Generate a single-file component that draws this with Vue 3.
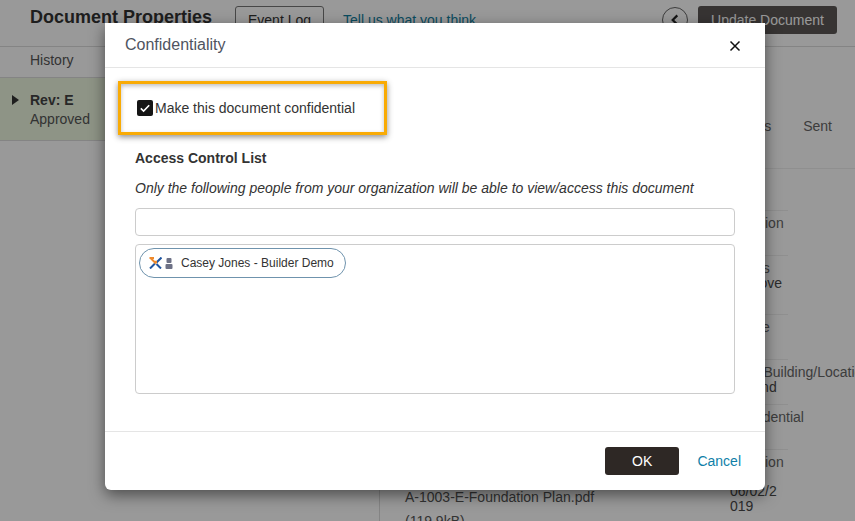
<script setup>
const details = [
  { label: 'Revision', value: '', h: 45 },
  { label: 'Status', value: 'Approve', h: 59 },
  { label: 'Phase', value: '', h: 45 },
  { label: 'Area Building/Location', value: 'Ground', h: 45 },
  { label: 'Confidential', value: '', h: 45 },
  { label: 'Revision', value: '', h: 35 },
]
</script>

<template>
  <div class="page">
    <header class="top">
      <h1 class="title">Document Properties</h1>
      <button class="ghost">Event Log</button>
      <a class="think">Tell us what you think</a>
      <span class="round">
        <svg width="26" height="26" viewBox="0 0 26 26"><path d="M15.5 8 L10.5 13 L15.5 18" fill="none" stroke="#222" stroke-width="2.4" /></svg>
      </span>
      <button class="update">Update Document</button>
    </header>

    <div class="content">
      <aside class="side">
        <div class="history">History</div>
        <div class="rev">
          <span class="tri"></span>
          <div>
            <div class="rev-name">Rev: E</div>
            <div>Approved</div>
          </div>
        </div>
      </aside>
      <main class="main">
        <div class="tabs"><span>Files</span><span>Sent</span></div>
        <div class="columns">
          <div class="files">
            <div class="file-name">A-1003-E-Foundation Plan.pdf</div>
            <div class="file-size">(119.9kB)</div>
          </div>
          <div class="details">
            <div v-for="d in details" :key="d.label + d.h" class="detail" :style="{ height: d.h + 'px' }">
              <div class="d-label">{{ d.label }}</div>
              <div class="d-value">{{ d.value }}</div>
            </div>
            <div class="date">06/02/2<br />019</div>
          </div>
        </div>
      </main>
    </div>

    <div class="overlay">
      <section class="modal">
        <div class="m-head">
          <span class="m-title">Confidentiality</span>
          <svg class="close" width="12" height="12" viewBox="0 0 12 12"><path d="M1.5 1.5 L10.5 10.5 M10.5 1.5 L1.5 10.5" stroke="#111" stroke-width="1.5" /></svg>
        </div>
        <div class="m-body">
          <label class="check-row">
            <span class="box">
              <svg width="16" height="16" viewBox="0 0 16 16"><path d="M3.8 8.3 L6.6 11 L12.2 5.3" fill="none" stroke="#fff" stroke-width="1.6" /></svg>
            </span>
            <span>Make this document confidential</span>
          </label>
          <h2 class="acl">Access Control List</h2>
          <p class="note">Only the following people from your organization will be able to view/access this document</p>
          <div class="input"></div>
          <div class="list">
            <div class="chip">
              <svg width="13" height="12" viewBox="0 0 13 12">
                <path d="M12.5 0.5 L7.5 5.5 M1 11.5 L6 6.5 M12 11.5 L7.5 7" fill="none" stroke="#1f55a0" stroke-width="2" />
                <path d="M0.5 1 H5 M1.5 1 L7 6.5 M7 6.5 V3.8" fill="none" stroke="#ef8a2c" stroke-width="2" />
              </svg>
              <svg class="person" width="8" height="11" viewBox="0 0 8 11">
                <rect x="1.5" y="0" width="5" height="5" rx="1" fill="#6d7186" />
                <rect x="0.5" y="6" width="7" height="5" rx="1" fill="#6d7186" />
              </svg>
              <span class="chip-text">Casey Jones - Builder Demo</span>
            </div>
          </div>
        </div>
        <div class="m-foot">
          <button class="ok">OK</button>
          <a class="cancel">Cancel</a>
        </div>
        <div class="callout"></div>
      </section>
    </div>
  </div>
</template>

<style scoped>
.page {
  position: relative;
  width: 855px;
  height: 521px;
  overflow: hidden;
  background: #fff;
  font-family: "Liberation Sans", Arial, sans-serif;
  font-size: 14px;
  color: #333;
}
.top {
  display: flex;
  align-items: center;
  border-bottom: 1px solid #ddd;
  padding: 0 18px 6px 30px;
  box-sizing: content-box;
  height: 40px;
}
.title {
  margin: 0 0 6px;
  font-size: 18px;
  font-weight: 700;
  color: #333;
  width: 205px;
}
.ghost {
  width: 89px;
  height: 28px;
  border: 1px solid #777;
  border-radius: 3px;
  background: #fff;
  font: 14px "Liberation Sans", Arial, sans-serif;
  color: #333;
}
.think {
  margin-left: 19px;
  color: #11809f;
}
.round {
  margin-left: auto;
  width: 26px;
  height: 26px;
  border: 1px solid #666;
  border-radius: 50%;
  box-sizing: border-box;
  display: flex;
  align-items: center;
  justify-content: center;
}
.update {
  margin-left: 10px;
  width: 139px;
  height: 28px;
  border: 0;
  border-radius: 3px;
  background: #5c5856;
  color: #fff;
  font: 14px "Liberation Sans", Arial, sans-serif;
}
.content {
  display: flex;
  height: 474px;
}
.side {
  width: 379px;
  flex: none;
  border-right: 1px solid #ddd;
}
.history {
  height: 31px;
  line-height: 26px;
  padding-left: 30px;
  border-bottom: 1px solid #ddd;
  box-sizing: border-box;
  color: #555;
}
.rev {
  display: flex;
  height: 63px;
  padding-top: 13px;
  box-sizing: border-box;
  background: #edf7e0;
  border-bottom: 1px solid #ddd;
  line-height: 19px;
  color: #555;
}
.tri {
  width: 0;
  height: 0;
  margin: 4px 11px 0 12px;
  border-left: 7px solid #333;
  border-top: 5.5px solid transparent;
  border-bottom: 5.5px solid transparent;
}
.rev-name {
  font-weight: 700;
  color: #444;
}
.main {
  flex: 1;
  min-width: 0;
}
.tabs {
  display: flex;
  justify-content: flex-end;
  gap: 32px;
  padding: 71px 23px 0 0;
  height: 50px;
  box-sizing: content-box;
  border-bottom: 1px solid #eee;
  color: #666;
}
.columns {
  display: flex;
  padding-left: 25px;
}
.files {
  width: 325px;
  flex: none;
  padding-top: 318px;
}
.file-name {
  color: #555;
  line-height: 20px;
}
.file-size {
  margin-top: 6px;
  color: #555;
}
.details {
  width: 58px;
  flex: none;
  padding-top: 41px;
  white-space: nowrap;
}
.detail {
  box-sizing: border-box;
  border-top: 1px solid #eee;
  padding-top: 5px;
  line-height: 15px;
  width: 58px;
}
.d-label {
  color: #666;
}
.d-value {
  color: #4a4a4a;
}
.date {
  line-height: 15px;
  color: #4a4a4a;
}
.overlay {
  position: absolute;
  inset: 0;
  background: rgba(0, 0, 0, 0.4);
}
.modal {
  position: absolute;
  left: 105px;
  top: 23px;
  width: 660px;
  height: 467px;
  background: #fff;
  border-radius: 0 0 6px 6px;
  box-shadow: 0 5px 15px rgba(0, 0, 0, 0.5);
  display: flex;
  flex-direction: column;
  box-sizing: border-box;
}
.m-head {
  display: flex;
  align-items: center;
  justify-content: space-between;
  height: 45px;
  flex: none;
  box-sizing: border-box;
  padding: 0 24px 0 20px;
  border-bottom: 1px solid #e5e5e5;
}
.m-title {
  font-size: 16px;
  color: #4f5461;
}
.close {
  margin-top: 1px;
}
.m-body {
  flex: 1;
  padding: 32px 30px 0;
}
.check-row {
  display: flex;
  align-items: center;
  padding-left: 2px;
  height: 16px;
  gap: 2px;
  color: #333;
}
.box {
  width: 16px;
  height: 16px;
  border-radius: 2px;
  background: #151515;
  display: block;
}
.box svg {
  display: block;
}
.acl {
  margin: 33px 0 0;
  font-size: 14px;
  line-height: 18px;
  font-weight: 700;
  color: #333;
}
.note {
  margin: 12px 0 0;
  font-style: italic;
  line-height: 18px;
  color: #333;
}
.input {
  margin-top: 11px;
  height: 28px;
  box-sizing: border-box;
  border: 1px solid #ccc;
  border-radius: 4px;
}
.list {
  margin-top: 8px;
  height: 150px;
  box-sizing: border-box;
  border: 1px solid #ccc;
  border-radius: 4px;
  padding: 3px;
}
.chip {
  display: inline-flex;
  align-items: center;
  box-sizing: border-box;
  width: 207px;
  height: 30px;
  padding-left: 9px;
  border: 1px solid #6f93ad;
  border-radius: 15px;
}
.person {
  margin-left: 3px;
}
.chip-text {
  margin-left: 8px;
  font-size: 12px;
  color: #333;
}
.m-foot {
  display: flex;
  align-items: center;
  height: 59px;
  flex: none;
  box-sizing: border-box;
  border-top: 1px solid #e5e5e5;
  padding: 0 24px 0 500px;
}
.ok {
  width: 75px;
  height: 28px;
  border: 0;
  border-radius: 3px;
  background: #2e2825;
  color: #fff;
  font: 14px "Liberation Sans", Arial, sans-serif;
}
.cancel {
  margin-left: 18px;
  color: #0f7fa8;
}
.callout {
  position: absolute;
  left: 13px;
  top: 58px;
  width: 269px;
  height: 54px;
  box-sizing: border-box;
  border: 3px solid #f9ab05;
  box-shadow: 0 2px 6px rgba(0, 0, 0, 0.45), inset 0 2px 4px rgba(0, 0, 0, 0.25);
}
</style>
